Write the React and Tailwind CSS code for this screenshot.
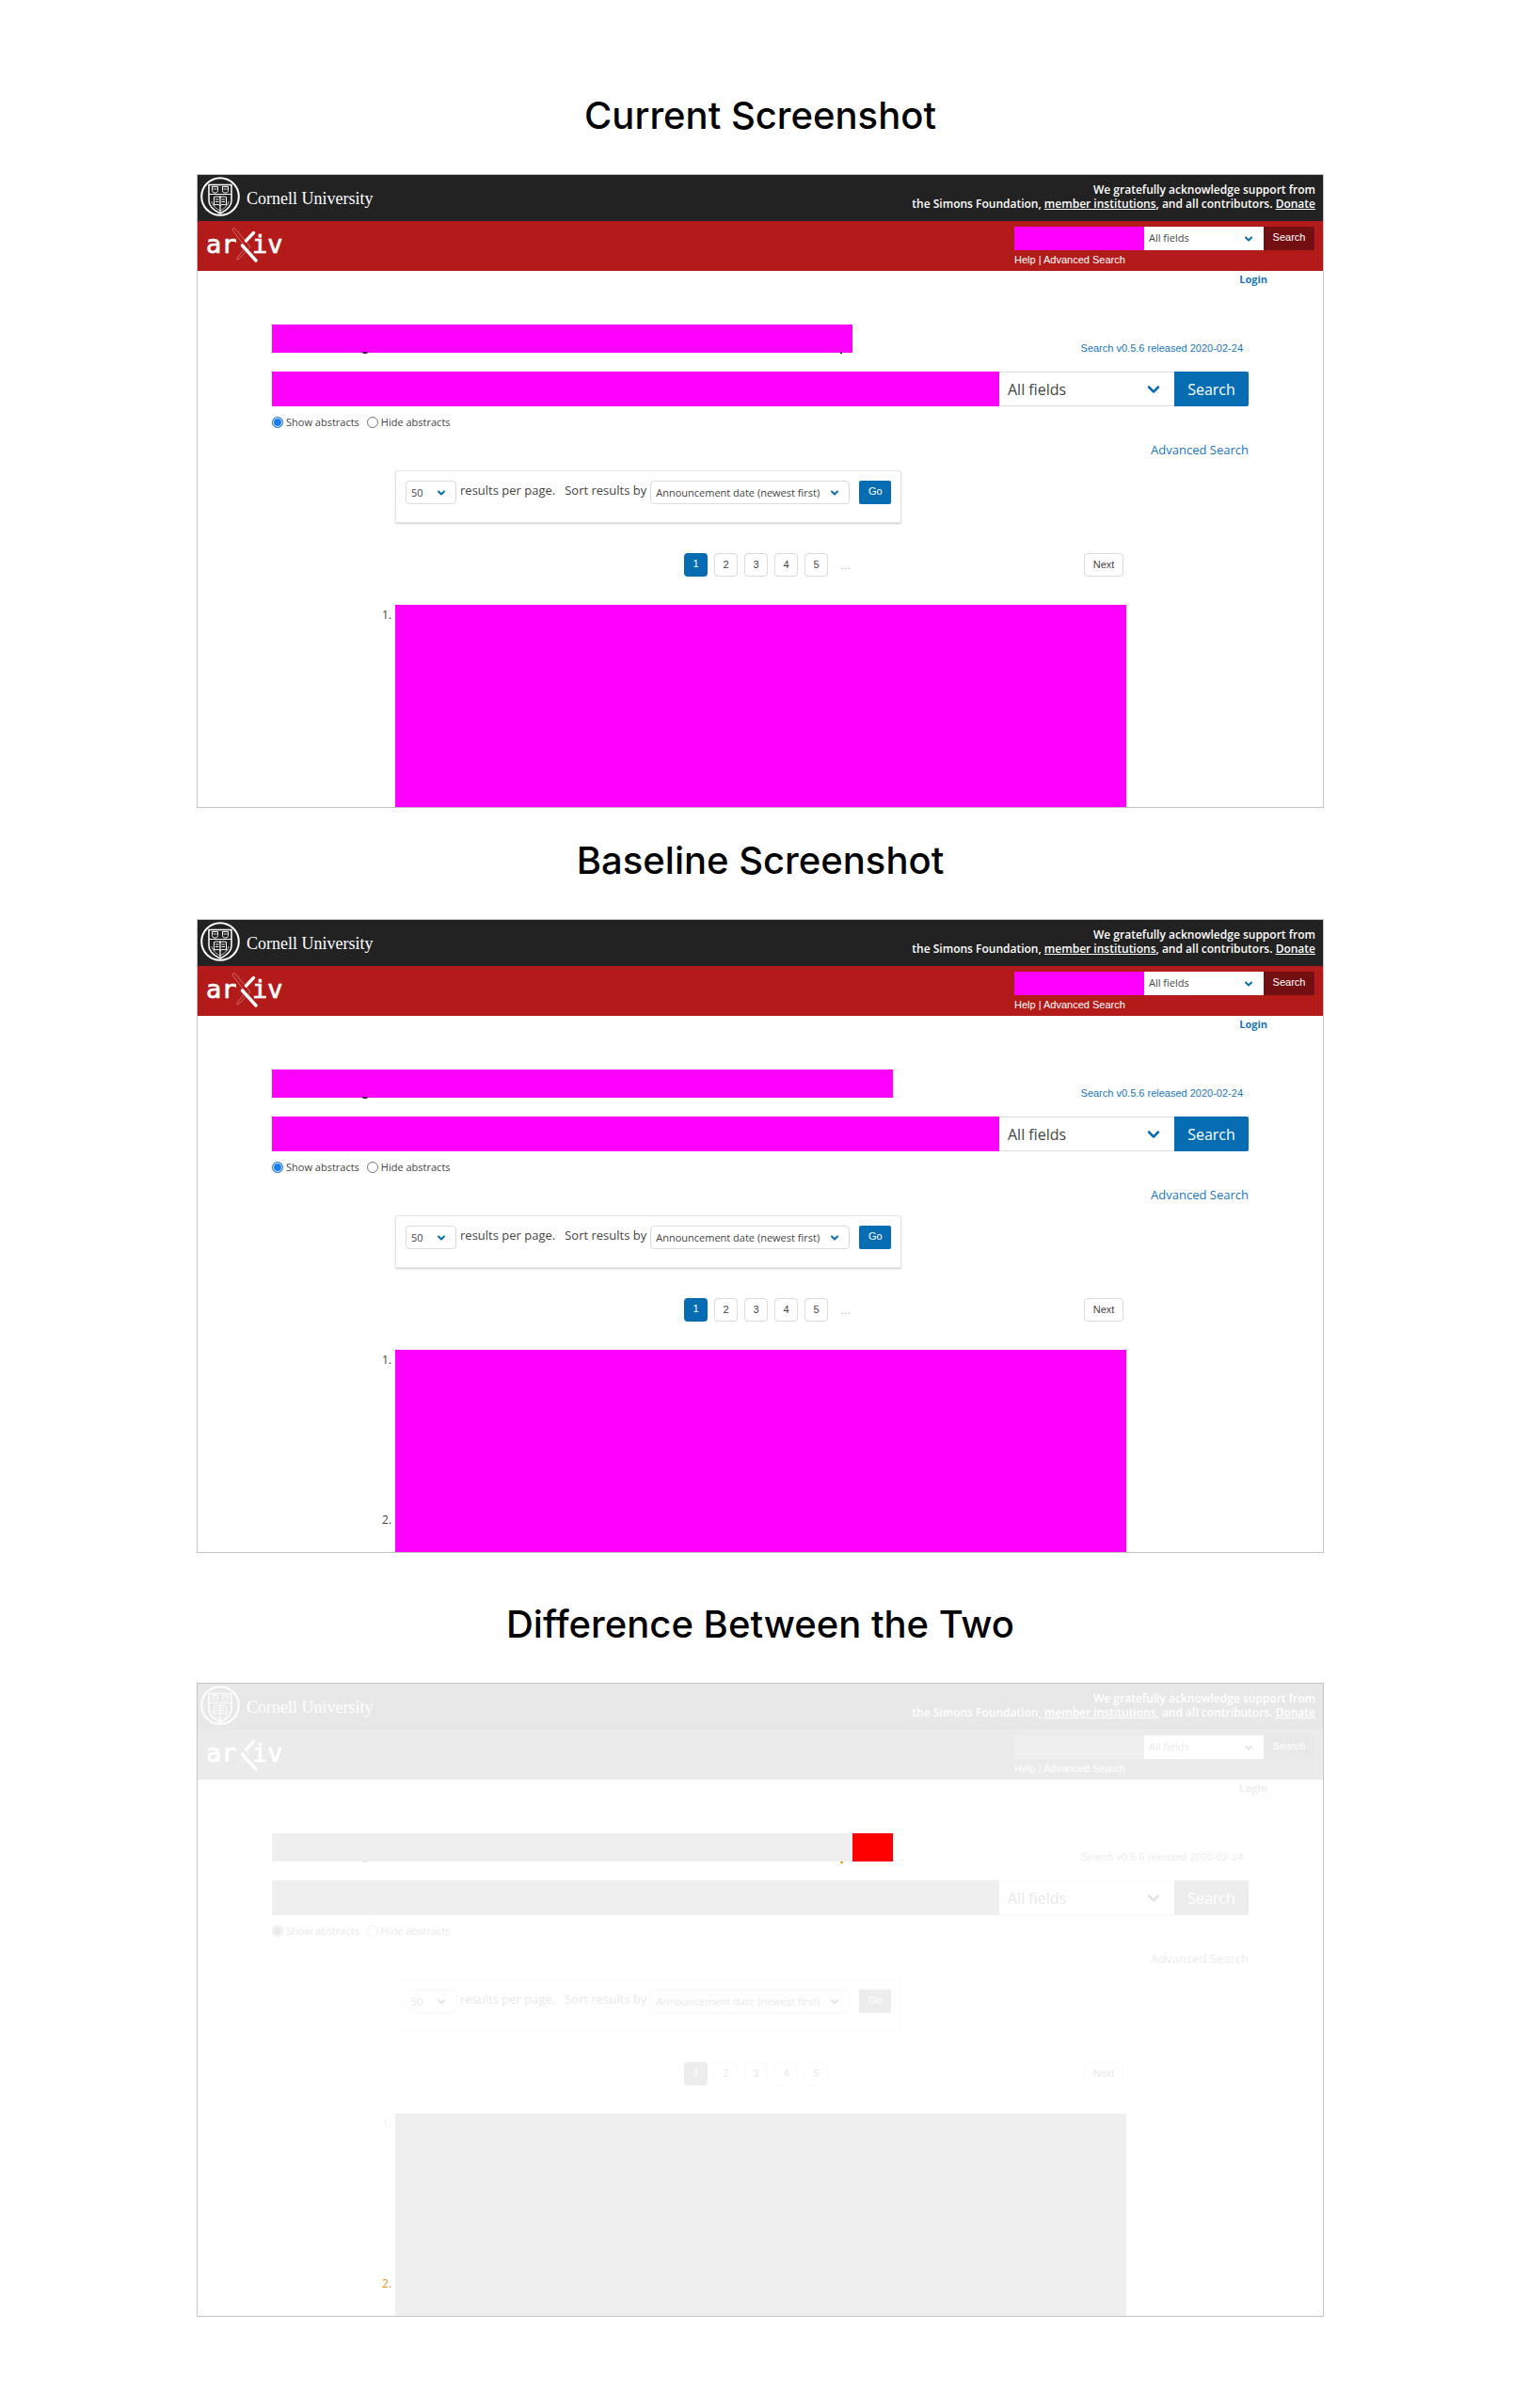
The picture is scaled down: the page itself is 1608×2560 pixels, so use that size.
import clsx from 'clsx';
import { ChevronDown } from 'lucide-react';

const colorTheme = {
  topBar: 'bg-[#222222] text-white',
  redBar: 'bg-[#b31b1b] text-white',
  mask: 'bg-[#ff00ff]',
  miniButton: 'bg-[#710f12] text-white',
  button: 'bg-[#076db3] text-white',
  link: 'text-[#1a76b8]',
  chevron: 'text-[#076db3]',
  text: 'text-[#454545]',
  muted: 'text-[#b0b0b0]',
  border: 'border-[#dbdbdb]',
  box: 'border-[#e6e6e6] shadow-[0_1px_2px_rgba(0,0,0,0.2)]',
  radio: 'border-[#767676]',
  radioOn: 'border-[#1a7cf0] bg-[#1a7cf0]',
  descender: 'bg-[#4a004a]',
};

const fadedTheme = {
  topBar: 'bg-[#e8e8e8] text-white',
  redBar: 'bg-[#ebebeb] text-white',
  mask: 'bg-[#efefef]',
  miniButton: 'bg-[#e9e9e9] text-white',
  button: 'bg-[#ededed] text-white',
  link: 'text-[#ededed]',
  chevron: 'text-[#e4e4e4]',
  text: 'text-[#e9e9e9]',
  muted: 'text-[#fafafa]',
  border: 'border-[#fafafa]',
  box: 'border-[#fbfbfb]',
  radio: 'border-[#f2f2f2]',
  radioOn: 'border-[#e9e9e9] bg-[#e9e9e9]',
  descender: 'bg-[#e9e9e9]',
};

function CornellSeal() {
  return (
    <svg viewBox="0 0 42 42" className="h-[42px] w-[42px]" fill="none" stroke="currentColor" aria-hidden="true">
      <circle cx="21" cy="21" r="19.8" strokeWidth="2" />
      <path d="M9 8.5h24v17c0 6-5 10-12 13.5C14 35.5 9 31.5 9 25.5z" strokeWidth="1.5" />
      <path d="M9 18.5h24M21 20v18" strokeWidth="1.2" />
      <path d="M12.5 10.5h6v4c0 1.5-1 2.5-3 2.5s-3-1-3-2.5zM23.500 10.500h6v4c0 1.500-1 2.500-3 2.500s-3-1-3-2.500z" strokeWidth="1" />
      <path d="M13.5 13h4M24.5 13h4" strokeWidth="0.8" />
      <path d="M14.5 21.5c2-.8 5-.8 6.5.5 1.5-1.3 4.5-1.3 6.5-.5V30c-2-.8-5-.8-6.5.5-1.5-1.3-4.5-1.3-6.5-.5z" strokeWidth="1" />
      <path d="M16 24h3.500M16 26.500h3.500M22.500 24H26M22.500 26.500H26" strokeWidth="0.9" />
      <path d="M12 26c1 5 5 8 9 10 4-2 8-5 9-10" strokeWidth="0.7" />
    </svg>
  );
}

function ArxivLogo() {
  return (
    <svg viewBox="0 0 84 38" className="h-[38px] w-[84px]" fill="none" stroke="currentColor" role="img">
      <g fill="currentColor" strokeWidth="0.7" fontFamily="'DejaVu Sans Mono', monospace" fontSize="27">
        <text x="0" y="28">ar</text>
        <text x="49" y="28">iv</text>
      </g>
      <path d="M28.5 2.5c.8-1.2 2-.8 2.7 0L46 20c1 1.200.5 2-.5 3.200L35 34.200c-1.500 1.300-3 .2-2-1.200L42 22 28.800 4.500c-.5-.7-.7-1.300-.3-2z" strokeWidth="0.6" opacity="0.6" />
      <path d="M42.5 15 50.500 6.500" strokeWidth="3.4" strokeLinecap="round" />
      <path d="M38.500 20 53 36" strokeWidth="3.4" strokeLinecap="round" />
    </svg>
  );
}

function Select({ label, value, theme, className, selectClass, iconClass, strokeWidth = 4 }) {
  return (
    <div className={clsx('relative', className)}>
      <select
        aria-label={label}
        className={clsx('h-full w-full appearance-none bg-white font-["Open_Sans",sans-serif]', theme.text, selectClass)}
      >
        <option>{value}</option>
      </select>
      <ChevronDown
        strokeWidth={strokeWidth}
        className={clsx('pointer-events-none absolute top-1/2 -translate-y-1/2', theme.chevron, iconClass)}
      />
    </div>
  );
}

function Header({ theme }) {
  return (
    <header>
      <div className={clsx('flex h-[49px] items-center justify-between pl-[3px] pr-2', theme.topBar)}>
        <a href="#cornell" className="flex items-center gap-[7px] pb-1">
          <CornellSeal />
          <span className='pt-1 font-["Liberation_Serif",serif] text-[18px] leading-6'>Cornell University</span>
        </a>
        <p className="pb-[3px] text-right text-[12px] font-semibold leading-[15px]">
          We gratefully acknowledge support from
          <br />
          the Simons Foundation, <a href="#members" className="underline">member institutions</a>, and all contributors.{' '}
          <a href="#donate" className="underline">Donate</a>
        </p>
      </div>
      <div className={clsx('flex h-[53px] items-start justify-between pl-[9px] pr-[9px] pt-[6px]', theme.redBar)}>
        <a href="#home" aria-label="arXiv"><ArxivLogo /></a>
        <form className='w-[319px] font-["Liberation_Sans",sans-serif] text-[11px]'>
          <div className="flex h-[25px]">
            <input aria-label="Search term" className={clsx('w-[138px]', theme.mask)} />
            <Select
              label="Search field"
              value="All fields"
              theme={theme}
              className="w-[127px]"
              selectClass="pl-[5px] text-[11px]"
              iconClass="right-[10px] h-3 w-3"
            />
            <button type="button" className={clsx('flex-1 rounded-r-xs pb-[3px]', theme.miniButton)}>Search</button>
          </div>
          <p className="leading-5">
            <a href="#help">Help</a> | <a href="#advanced">Advanced Search</a>
          </p>
        </form>
      </div>
    </header>
  );
}

function ScreenshotPanel({ title, id, titleClass, theme, maskClass, rows, children }) {
  return (
    <section>
      <h2 className={clsx('mb-8 text-center font-["Inter",sans-serif] text-[40px] font-medium leading-[60px] text-black', titleClass)}>
        {title}
      </h2>
      <div className='border border-[#c4c4c4] bg-white font-["Open_Sans",sans-serif]'>
        <Header theme={theme} />
        <div className="px-[79px]">
          <div className="-mr-5 text-right">
            <a href="#login" className={clsx('block text-[11px] font-bold leading-[18px]', theme.link)}>Login</a>
          </div>
          <div className="mt-[39px] flex items-end justify-between pr-[6px]">
            <div className={clsx('relative h-[30px]', maskClass, theme.mask)}>
              <span className={clsx('absolute -bottom-px left-24 h-[2px] w-[6px] rounded-b-full', theme.descender)} />
              {children}
            </div>
            <a href="#release" className={clsx('font-["Liberation_Sans",sans-serif] text-[11px] leading-[10px]', theme.link)}>
              Search v0.5.6 released 2020-02-24
            </a>
          </div>
          <div className="mt-5 flex h-[37px]">
            <input aria-label="Search query" className={clsx('min-w-0 flex-1', theme.mask)} />
            <Select
              label="Query field"
              value="All fields"
              theme={theme}
              className="w-[186px]"
              selectClass={clsx('border-y pl-[9px] text-[16px]', theme.border)}
              iconClass="right-[12px] h-5 w-5"
              strokeWidth={3}
            />
            <button type="button" className={clsx('w-[79px] rounded-r-xs text-[16px]', theme.button)}>Search</button>
          </div>
          <div className={clsx('mt-2 flex h-[18px] items-center gap-2 text-[11px]', theme.text)}>
            <label className="flex items-center gap-[3px]">
              <input
                type="radio"
                name={id}
                defaultChecked
                className={clsx('h-3 w-3 appearance-none rounded-full border shadow-[inset_0_0_0_1px_white]', theme.radioOn)}
              />
              Show abstracts
            </label>
            <label className="flex items-center gap-[3px]">
              <input type="radio" name={id} className={clsx('h-3 w-3 appearance-none rounded-full border', theme.radio)} />
              Hide abstracts
            </label>
          </div>
          <div className="mt-[10px] text-right">
            <a href="#advanced" className={clsx('block text-[13px] leading-5', theme.link)}>Advanced Search</a>
          </div>

          <div className="pl-[131px] pr-[130px]">
            <form className={clsx('mt-3 flex w-fit items-start rounded-xs border px-[10px] pb-[19px] pt-[10px] text-[13px] leading-5', theme.box, theme.text)}>
              <Select
                label="Results per page"
                value="50"
                theme={theme}
                className="h-[25px] w-[54px]"
                selectClass={clsx('rounded-sm border pl-[5px] text-[11px]', theme.border)}
                iconClass="right-[10px] h-3 w-3"
              />
              <span className="ml-1">results per page.</span>
              <span className="ml-[10px]">Sort results by</span>
              <Select
                label="Sort results by"
                value="Announcement date (newest first)"
                theme={theme}
                className="ml-1 h-[25px] w-[212px]"
                selectClass={clsx('rounded-sm border pl-[5px] text-[11px]', theme.border)}
                iconClass="right-[10px] h-3 w-3"
              />
              <button
                type="button"
                className={clsx('ml-[10px] h-[25px] w-[34px] rounded-xs pb-[3px] font-["Liberation_Sans",sans-serif] text-[11px]', theme.button)}
              >
                Go
              </button>
            </form>
            <nav className='mt-8 flex h-[25px] items-stretch justify-between pl-[307px] pr-[3px] font-["Liberation_Sans",sans-serif] text-[11px]'>
              <div className="flex gap-[7px]">
                {[1, 2, 3, 4, 5].map((page) => (
                  <a
                    key={page}
                    href={`#page-${page}`}
                    className={clsx(
                      'w-[25px] rounded-sm pt-[3px] text-center leading-4',
                      page === 1 ? ['pt-1', theme.button] : ['border', theme.border, theme.text]
                    )}
                  >
                    {page}
                  </a>
                ))}
                <span className={clsx('pl-[6px] pt-[5px] leading-4', theme.muted)}>…</span>
              </div>
              <a href="#next" className={clsx('w-[42px] rounded-sm border pt-[3px] text-center leading-4', theme.border, theme.text)}>
                Next
              </a>
            </nav>
          </div>

          <ol className="mt-[30px] pl-[103px] pr-[130px] text-[12px] leading-[22px]">
            {rows.map((row, i) => (
              <li key={i} className={clsx('flex', row.size)}>
                <span className={clsx('w-7 pr-1 text-right', row.color || theme.text)}>{row.label}</span>
                <div className={clsx('flex-1', theme.mask)} />
              </li>
            ))}
          </ol>
        </div>
      </div>
    </section>
  );
}

export default function App() {
  return (
    <main className="min-h-screen bg-white pb-[97px] pl-[13%] pr-[12.5%] pt-[93px]">
      <ScreenshotPanel
        id="current"
        title="Current Screenshot"
        theme={colorTheme}
        maskClass="w-[617px]"
        rows={[{ label: '1.', size: 'h-[215px]' }]}
      >
        <span className="absolute -bottom-px right-[11px] h-[2px] w-[2px] bg-[#4a004a]" />
      </ScreenshotPanel>
      <ScreenshotPanel
        id="baseline"
        title="Baseline Screenshot"
        titleClass="mt-[26px]"
        theme={colorTheme}
        maskClass="w-[660px]"
        rows={[
          { label: '1.', size: 'h-[170px]' },
          { label: '2.', size: 'h-[45px]' },
        ]}
      />
      <ScreenshotPanel
        id="difference"
        title="Difference Between the Two"
        titleClass="mt-[46px]"
        theme={fadedTheme}
        maskClass="w-[660px]"
        rows={[
          { label: '1.', size: 'h-[170px]', color: 'text-[#f2f2f2]' },
          { label: '2.', size: 'h-[45px]', color: 'text-[#e8901c]' },
        ]}
      >
        <span className="absolute inset-y-0 right-0 w-[43px] bg-[#ff0000]" />
        <span className="absolute -bottom-[2px] right-[53px] h-[2px] w-[3px] bg-[#e8a01c]" />
      </ScreenshotPanel>
    </main>
  );
}
